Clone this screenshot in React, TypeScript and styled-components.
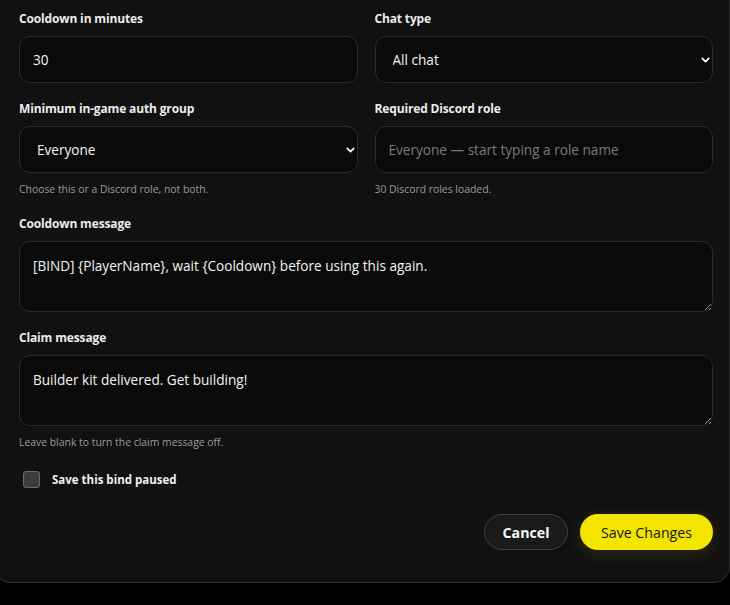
import React from 'react';
import styled, { createGlobalStyle } from 'styled-components';
import { ChevronDown } from 'lucide-react';

const GlobalStyle = createGlobalStyle`
  html, body {
    margin: 0;
    padding: 0;
    background: #000;
    overflow: hidden;
  }
  body {
    font-family: "Open Sans", "Noto Sans", sans-serif;
    color: #f2f2f2;
  }
`;

export default function App() {
  return (
    <>
      <GlobalStyle />
      <Modal>
        <Grid>
          <Field>
            <Label>Cooldown in minutes</Label>
            <TextInput defaultValue="30" />
          </Field>
          <Field>
            <Label>Chat type</Label>
            <SelectWrap>
              <Select defaultValue="all">
                <option value="all">All chat</option>
                <option value="team">Team chat</option>
              </Select>
              <Chevron><ChevronDown size={13} strokeWidth={3.2} /></Chevron>
            </SelectWrap>
          </Field>
          <Field>
            <Label>Minimum in-game auth group</Label>
            <SelectWrap>
              <Select defaultValue="everyone">
                <option value="everyone">Everyone</option>
                <option value="mod">Moderator</option>
              </Select>
              <Chevron><ChevronDown size={13} strokeWidth={3.2} /></Chevron>
            </SelectWrap>
            <Hint>Choose this or a Discord role, not both.</Hint>
          </Field>
          <Field>
            <Label>Required Discord role</Label>
            <TextInput placeholder="Everyone — start typing a role name" />
            <Hint>30 Discord roles loaded.</Hint>
          </Field>
        </Grid>

        <Field>
          <Label>Cooldown message</Label>
          <TextArea defaultValue="[BIND] {PlayerName}, wait {Cooldown} before using this again." />
        </Field>

        <Field>
          <Label>Claim message</Label>
          <TextArea defaultValue="Builder kit delivered. Get building!" />
          <Hint>Leave blank to turn the claim message off.</Hint>
        </Field>

        <CheckRow>
          <Box type="checkbox" />
          <CheckLabel>Save this bind paused</CheckLabel>
        </CheckRow>

        <Actions>
          <GhostButton>Cancel</GhostButton>
          <PrimaryButton>Save Changes</PrimaryButton>
        </Actions>
      </Modal>
    </>
  );
}

const Modal = styled.div`
  box-sizing: border-box;
  width: 736px;
  margin: -24px 0 0 -6px;
  padding: 33px 16px 32px 24px;
  background: #111111;
  border: 1px solid #2f2f2f;
  border-radius: 16px;
  display: flex;
  flex-direction: column;
  gap: 17px;
`;

const Grid = styled.div`
  display: grid;
  grid-template-columns: 1fr 1fr;
  column-gap: 17px;
  row-gap: 17px;
  margin-bottom: 2px;
`;

const Field = styled.div`
  display: flex;
  flex-direction: column;
`;

const Label = styled.label`
  font-size: 12px;
  font-weight: 700;
  line-height: 17px;
  color: #ececec;
  margin-bottom: 9px;
  letter-spacing: -0.15px;
`;

const controlBase = `
  box-sizing: border-box;
  width: 100%;
  background: #0a0a0a;
  border: 1px solid #2b2b2b;
  border-radius: 11px;
  color: #f4f4f4;
  font-family: "Open Sans", "Noto Sans", sans-serif;
  font-size: 13.6px;
  outline: none;
`;

const TextInput = styled.input`
  ${controlBase}
  height: 47px;
  padding: 0 13px;
  &::placeholder {
    color: #7a7a7a;
  }
`;

const SelectWrap = styled.div`
  position: relative;
`;

const Select = styled.select`
  ${controlBase}
  height: 47px;
  padding: 0 30px 0 17px;
  appearance: none;
`;

const Chevron = styled.span`
  position: absolute;
  right: 1px;
  top: 50%;
  transform: translateY(-50%);
  display: flex;
  color: #fff;
  pointer-events: none;
`;

const TextArea = styled.textarea`
  ${controlBase}
  height: 71px;
  padding: 14px 13px;
  line-height: 20px;
  resize: vertical;
`;

const Hint = styled.div`
  font-size: 10.4px;
  line-height: 14px;
  color: #9a9a9a;
  margin-top: 9px;
`;

const CheckRow = styled.div`
  display: flex;
  align-items: center;
  gap: 12px;
  padding-left: 4px;
  margin-top: 5px;
`;

const Box = styled.input`
  appearance: none;
  margin: 0;
  width: 17px;
  height: 17px;
  box-sizing: border-box;
  background: #3b3b3b;
  border: 1px solid #6a6a6a;
  border-radius: 3px;
`;

const CheckLabel = styled.span`
  font-size: 11.5px;
  font-weight: 700;
  color: #f0f0f0;
`;

const Actions = styled.div`
  display: flex;
  justify-content: flex-end;
  gap: 12px;
  margin-top: 9px;
`;

const buttonBase = `
  height: 36px;
  border-radius: 999px;
  font-family: "Open Sans", "Noto Sans", sans-serif;
  font-size: 14.2px;
  cursor: pointer;
  box-sizing: border-box;
`;

const GhostButton = styled.button`
  ${buttonBase}
  width: 84px;
  background: #1a1a1a;
  border: 1px solid #404040;
  color: #fafafa;
  font-weight: 700;
`;

const PrimaryButton = styled.button`
  ${buttonBase}
  width: 133px;
  background: #f3e500;
  border: none;
  color: #141414;
  font-weight: 500;
  box-shadow: 0 4px 18px rgba(243, 229, 0, 0.12);
`;
